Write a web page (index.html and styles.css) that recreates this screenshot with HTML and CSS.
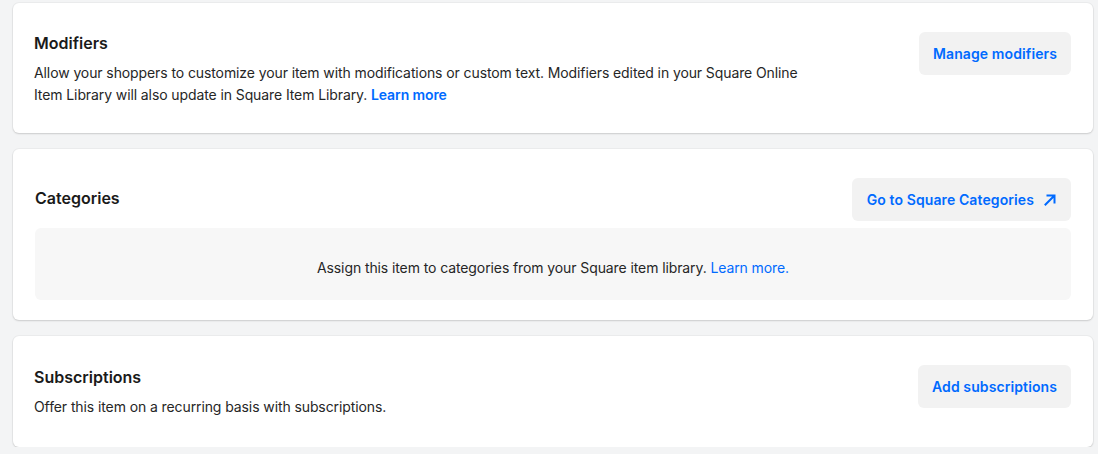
FILE: index.html
```html
<!DOCTYPE html>
<html lang="en">
<head>
  <meta charset="UTF-8" />
  <title>Item settings</title>
  <link rel="stylesheet" href="styles.css">
</head>
<body>
  <div class="page">
    <!-- Modifiers -->
    <section class="card card-modifiers">
      <div class="card-row">
        <div class="card-text">
          <h2 class="card-title">Modifiers</h2>
          <p class="card-desc">
            Allow your shoppers to customize your item with modifications or custom text. Modifiers edited in your Square Online
            Item Library will also update in Square Item Library. <a href="#" class="link-bold">Learn more</a>
          </p>
        </div>
        <button class="btn">Manage modifiers</button>
      </div>
    </section>

    <!-- Categories -->
    <section class="card card-categories">
      <div class="card-row">
        <h2 class="card-title">Categories</h2>
        <button class="btn btn-ext">
          Go to Square Categories
          <svg class="btn-icon" width="16" height="16" viewBox="0 0 16 16" fill="none">
            <path d="M3.5 12.5L12 4M5.5 3.5H12.5V10.5" stroke="#006aff" stroke-width="2" stroke-linecap="square"/>
          </svg>
        </button>
      </div>
      <div class="empty-box">
        <span>Assign this item to categories from your Square item library. <a href="#" class="link">Learn more.</a></span>
      </div>
    </section>

    <!-- Subscriptions -->
    <section class="card card-subs">
      <div class="card-row">
        <div class="card-text">
          <h2 class="card-title">Subscriptions</h2>
          <p class="card-desc">Offer this item on a recurring basis with subscriptions.</p>
        </div>
        <button class="btn">Add subscriptions</button>
      </div>
    </section>
  </div>
</body>
</html>
```
FILE: styles.css
```css
body {
  margin: 0;
  padding: 0;
  background: #f3f4f5;
  font-family: Inter, "Noto Sans", sans-serif;
  color: #1a1a1a;
}

.page {
  padding: 3px 5px 0 13px;
  display: flex;
  flex-direction: column;
  gap: 16px;
}

.card {
  background: #fff;
  border-radius: 6px;
  box-shadow: 0 0 0 1px rgba(0, 0, 0, 0.03), 0 1px 2px rgba(0, 0, 0, 0.14);
  padding: 28px 22px 27px 21px;
}

.card-categories {
  padding: 29px 22px 20px 22px;
}

.card-subs {
  padding: 29px 22px 29px 21px;
}

.card-row {
  display: flex;
  justify-content: space-between;
  align-items: flex-start;
}

.card-title {
  margin: 0;
  font-size: 16px;
  line-height: 24px;
  font-weight: 600;
  color: #1a1a1a;
}

.card-categories .card-title {
  margin-top: 8px;
}

.card-desc {
  margin: 7px 0 0 0;
  font-size: 14px;
  line-height: 22px;
  letter-spacing: -0.1px;
  color: #262626;
  max-width: 780px;
}

.btn {
  flex-shrink: 0;
  display: inline-flex;
  align-items: center;
  gap: 8px;
  height: 43px;
  padding: 0 14px;
  margin-top: 1px;
  border: none;
  border-radius: 6px;
  background: #f2f2f2;
  color: #006aff;
  font-family: Inter, "Noto Sans", sans-serif;
  font-size: 14px;
  font-weight: 600;
  letter-spacing: 0.1px;
  cursor: pointer;
}

.btn-ext {
  padding: 0 13px 0 15px;
}

.card-subs .btn,
.card-categories .btn {
  margin-top: 0;
}

.btn-icon {
  display: block;
}

.empty-box {
  margin-top: 7px;
  height: 72px;
  box-sizing: border-box;
  padding-top: 6px;
  background: #f7f7f7;
  border-radius: 6px;
  display: flex;
  align-items: center;
  justify-content: center;
  font-size: 14px;
  letter-spacing: -0.1px;
  color: #262626;
}

.link {
  color: #006aff;
  text-decoration: none;
}

.link-bold {
  color: #006aff;
  text-decoration: none;
  font-weight: 600;
}
```
